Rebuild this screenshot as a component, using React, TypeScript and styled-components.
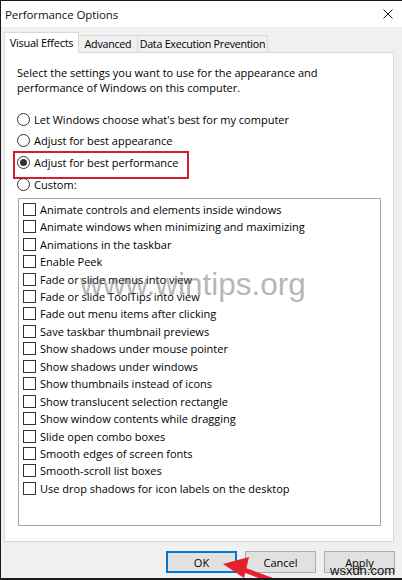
import React from "react";
import styled, { createGlobalStyle } from "styled-components";

const Global = createGlobalStyle`
  html, body { margin: 0; padding: 0; background: #fff; }
  body { font-family: "Open Sans", "Noto Sans", sans-serif; font-size: 11px; color: #000; }
  * { box-sizing: border-box; }
`;

const Window = styled.div`
  position: relative;
  width: 402px;
  height: 580px;
  border-top: 1px solid #1a1a1a;
  border-left: 1px solid #1a1a1a;
  border-bottom: 2px solid #1a1a1a;
  background: #f0f0f0;
  display: flex;
  flex-direction: column;
  overflow: hidden;
`;

const TitleBar = styled.div`
  height: 26px;
  flex: 0 0 26px;
  background: #fff;
  display: flex;
  align-items: center;
  justify-content: space-between;
  padding: 0 9px 0 4px;
`;

const Title = styled.span`
  font-size: 11.5px;
  color: #111;
  letter-spacing: -0.1px;
`;

const Body = styled.div`
  flex: 1;
  display: flex;
  flex-direction: column;
  padding: 6px 7px 0 3px;
`;

const TabRow = styled.div`
  display: flex;
  align-items: flex-end;
  height: 20px;
  margin-bottom: -1px;
  position: relative;
  z-index: 1;
`;

const Tab = styled.div<{ $active?: boolean; $w: number }>`
  width: ${(p) => p.$w}px;
  height: ${(p) => (p.$active ? 21 : 18)}px;
  background: ${(p) => (p.$active ? "#fff" : "#f0f0f0")};
  border: 1px solid #d9d9d9;
  border-bottom: ${(p) => (p.$active ? "none" : "1px solid #d9d9d9")};
  margin-left: ${(p) => (p.$active ? 0 : -1)}px;
  display: flex;
  align-items: center;
  justify-content: center;
  font-size: ${(p) => (p.$active ? 11 : 10.7)}px;
  letter-spacing: -0.25px;
  padding-bottom: ${(p) => (p.$active ? 2 : 1)}px;
  white-space: nowrap;
  overflow: hidden;
`;

const Panel = styled.div`
  height: 490px;
  width: 390px;
  background: #fff;
  border: 1px solid #d9d9d9;
  padding: 12px 12px 0 12px;
  display: flex;
  flex-direction: column;
`;

const Description = styled.p`
  margin: 0;
  font-size: 11px;
  line-height: 15px;
`;

const RadioGroup = styled.div`
  margin-top: 13.5px;
  display: flex;
  flex-direction: column;
`;

const RadioRow = styled.div<{ $highlight?: boolean }>`
  position: relative;
  height: 21.67px;
  display: flex;
  align-items: center;
  gap: 4px;
  font-size: 11px;
  ${(p) =>
    p.$highlight &&
    `&::after {
      content: "";
      position: absolute;
      left: -4px;
      top: -1px;
      width: 172px;
      height: 24px;
      border: 2px solid #d4202b;
    }`}
`;

const RadioCircle = styled.span<{ $checked?: boolean }>`
  width: 13px;
  height: 13px;
  border-radius: 50%;
  border: 1px solid #333;
  background: #fff;
  display: flex;
  align-items: center;
  justify-content: center;
  flex: 0 0 13px;
  &::after {
    content: "";
    display: ${(p) => (p.$checked ? "block" : "none")};
    width: 7px;
    height: 7px;
    border-radius: 50%;
    background: #333;
  }
`;

const ListBox = styled.div`
  position: relative;
  margin: 3px 0 0 1px;
  height: 328px;
  border: 1px solid #a8a8a8;
  padding: 1.5px 0 0 4px;
  display: flex;
  flex-direction: column;
`;

const CheckRow = styled.div`
  height: 17.44px;
  display: flex;
  align-items: center;
  gap: 4px;
  font-size: 11px;
  white-space: nowrap;
`;

const CheckBox = styled.span`
  width: 13px;
  height: 13px;
  flex: 0 0 13px;
  border: 1px solid #333;
  background: #fff;
`;

const Watermark = styled.div`
  position: absolute;
  left: 61px;
  top: 70px;
  font-family: "Liberation Sans", Arial, sans-serif;
  font-size: 31.5px;
  line-height: 31px;
  color: rgba(110, 110, 110, 0.5);
  pointer-events: none;
  white-space: nowrap;
`;

const ButtonRow = styled.div`
  display: flex;
  justify-content: flex-end;
  gap: 8px;
  padding-top: 9px;
`;

const Button = styled.div<{ $primary?: boolean }>`
  width: 71px;
  height: 22px;
  background: #e1e1e1;
  border: ${(p) => (p.$primary ? "2px solid #0078d7" : "1px solid #adadad")};
  display: flex;
  align-items: center;
  justify-content: center;
  font-size: 11px;
`;

const SiteMark = styled.div`
  position: absolute;
  left: 329px;
  top: 563px;
  font-family: "Liberation Sans", Arial, sans-serif;
  font-size: 13px;
  line-height: 14px;
  color: #111;
  pointer-events: none;
`;

const Arrow = styled.svg`
  position: absolute;
  left: 214px;
  top: 549px;
  width: 80px;
  height: 31px;
  pointer-events: none;
`;

const CloseIcon = () => (
  <svg width="10" height="10" viewBox="0 0 10 10">
    <path d="M0.5 0.5 L9.5 9.5 M9.5 0.5 L0.5 9.5" stroke="#111" strokeWidth="1" />
  </svg>
);

const options = [
  "Animate controls and elements inside windows",
  "Animate windows when minimizing and maximizing",
  "Animations in the taskbar",
  "Enable Peek",
  "Fade or slide menus into view",
  "Fade or slide ToolTips into view",
  "Fade out menu items after clicking",
  "Save taskbar thumbnail previews",
  "Show shadows under mouse pointer",
  "Show shadows under windows",
  "Show thumbnails instead of icons",
  "Show translucent selection rectangle",
  "Show window contents while dragging",
  "Slide open combo boxes",
  "Smooth edges of screen fonts",
  "Smooth-scroll list boxes",
  "Use drop shadows for icon labels on the desktop",
];

const radios = [
  { label: "Let Windows choose what's best for my computer" },
  { label: "Adjust for best appearance" },
  { label: "Adjust for best performance", checked: true, highlight: true },
  { label: "Custom:" },
];

export default function App() {
  return (
    <>
      <Global />
      <Window>
        <TitleBar>
          <Title>Performance Options</Title>
          <CloseIcon />
        </TitleBar>
        <Body>
          <TabRow>
            <Tab $active $w={75}>Visual Effects</Tab>
            <Tab $w={60}>Advanced</Tab>
            <Tab $w={131}>Data Execution Prevention</Tab>
          </TabRow>
          <Panel>
            <Description>
              Select the settings you want to use for the appearance and
              <br />
              performance of Windows on this computer.
            </Description>
            <RadioGroup>
              {radios.map((r) => (
                <RadioRow key={r.label} $highlight={r.highlight}>
                  <RadioCircle $checked={r.checked} />
                  <span>{r.label}</span>
                </RadioRow>
              ))}
            </RadioGroup>
            <ListBox>
              {options.map((o) => (
                <CheckRow key={o}>
                  <CheckBox />
                  <span>{o}</span>
                </CheckRow>
              ))}
              <Watermark>www.wintips.org</Watermark>
            </ListBox>
          </Panel>
          <ButtonRow>
            <Button $primary>OK</Button>
            <Button>Cancel</Button>
            <Button>Apply</Button>
          </ButtonRow>
        </Body>
        <SiteMark>wsxdn.com</SiteMark>
        <Arrow viewBox="214 549 80 31">
          <path d="M238 567 L278 582" stroke="#e3222b" strokeWidth="5" strokeLinecap="round" />
          <polygon points="222,563 248,556 243,577" fill="#e3222b" />
        </Arrow>
      </Window>
    </>
  );
}
